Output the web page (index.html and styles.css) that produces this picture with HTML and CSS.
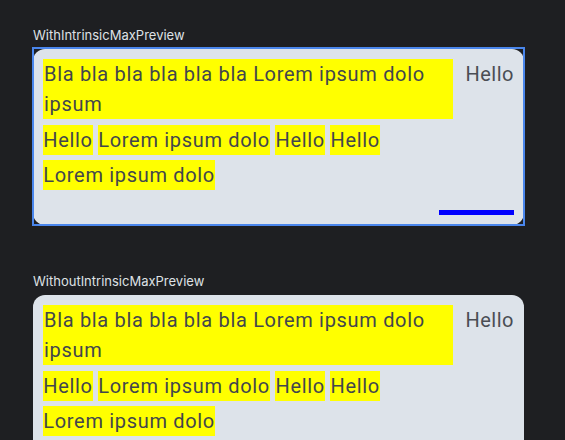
FILE: index.html
```html
<!DOCTYPE html>
<html>
<head>
<meta charset="utf-8">
<link rel="stylesheet" href="styles.css">
</head>
<body>
  <section class="preview">
    <div class="label">WithIntrinsicMaxPreview</div>
    <div class="card selected">
      <div class="row">
        <div class="flow">
          <span class="chip wide">Bla bla bla bla bla bla Lorem ipsum dolo ipsum</span>
          <span class="chip">Hello</span>
          <span class="chip">Lorem ipsum dolo</span>
          <span class="chip">Hello</span>
          <span class="chip">Hello</span>
          <span class="chip">Lorem ipsum dolo</span>
        </div>
        <div class="side">Hello</div>
      </div>
      <div class="bar"></div>
    </div>
  </section>
  <section class="preview second">
    <div class="label">WithoutIntrinsicMaxPreview</div>
    <div class="card">
      <div class="row">
        <div class="flow">
          <span class="chip wide">Bla bla bla bla bla bla Lorem ipsum dolo ipsum</span>
          <span class="chip">Hello</span>
          <span class="chip">Lorem ipsum dolo</span>
          <span class="chip">Hello</span>
          <span class="chip">Hello</span>
          <span class="chip">Lorem ipsum dolo</span>
        </div>
        <div class="side">Hello</div>
      </div>
      <div class="bar"></div>
    </div>
  </section>
</body>
</html>
```
FILE: styles.css
```css
html, body {
  margin: 0;
  padding: 0;
  background: #1e1f22;
}
body {
  padding-top: 27px;
  padding-left: 33px;
}
.preview.second {
  margin-top: 48px;
}
.label {
  font-family: Inter, "Noto Sans", sans-serif;
  font-size: 13px;
  line-height: 16px;
  color: #dfe1e5;
  margin-bottom: 6px;
}
.card {
  position: relative;
  width: 491px;
  box-sizing: border-box;
  background: #dde3ea;
  border-radius: 12px;
  padding: 10px;
  display: flex;
  flex-direction: column;
}
.card.selected::after {
  content: "";
  position: absolute;
  inset: -2px -1px -1px -1px;
  border: 2px solid #4a86ec;
  pointer-events: none;
}
.row {
  display: flex;
  gap: 12px;
  align-items: flex-start;
}
.flow {
  flex: 1;
  display: flex;
  flex-wrap: wrap;
  column-gap: 5px;
  row-gap: 5.5px;
}
.chip {
  background: #ffff00;
  font-family: Roboto, "Liberation Sans", sans-serif;
  font-size: 20px;
  line-height: 30px;
  color: #42464d;
  letter-spacing: 0.68px;
  padding: 0 0.3px;
}
.chip.wide {
  flex-basis: 100%;
  padding-left: 1px;
  box-sizing: border-box;
}
.side {
  font-family: Roboto, "Liberation Sans", sans-serif;
  font-size: 20px;
  line-height: 30px;
  color: #4a4d54;
  letter-spacing: 0.5px;
}
.bar {
  align-self: flex-end;
  width: 75px;
  height: 5px;
  background: #0000ff;
  margin-top: 20px;
}
```
